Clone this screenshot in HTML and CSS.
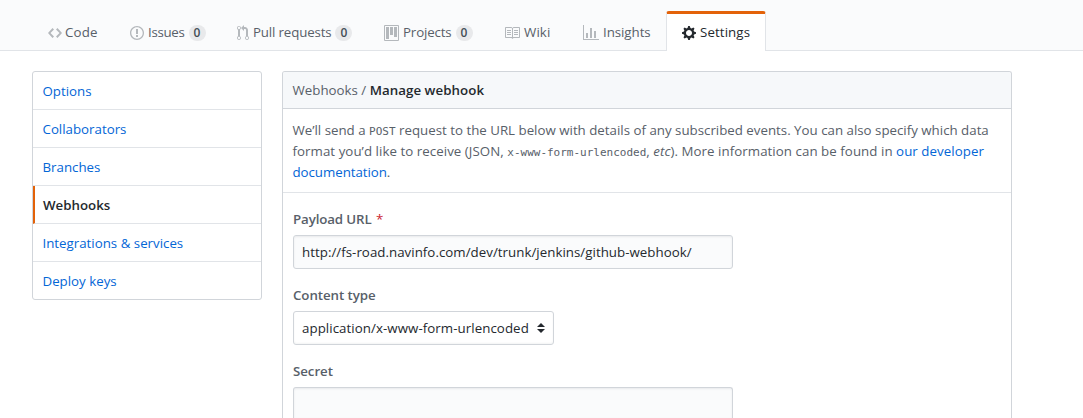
FILE: index.html
```html
<!DOCTYPE html>
<html lang="en">
<head>
<meta charset="utf-8">
<title>Manage webhook</title>
<link rel="stylesheet" href="styles.css">
</head>
<body>
<header class="repohead">
  <nav class="tabs">
    <a class="tab tab-code"><svg class="icon" width="14" height="16" viewBox="0 0 14 16"><path fill-rule="evenodd" d="M9.5 3L8 4.5 11.5 8 8 11.5 9.5 13 14 8 9.5 3zm-5 0L0 8l4.5 5L6 11.5 2.500 8 6 4.500 4.500 3z"/></svg><span>Code</span></a>
    <a class="tab tab-issues"><svg class="icon" width="14" height="16" viewBox="0 0 14 16"><path fill-rule="evenodd" d="M7 2.300c3.140 0 5.700 2.560 5.700 5.700s-2.560 5.700-5.700 5.700A5.710 5.710 0 0 1 1.300 8c0-3.140 2.560-5.700 5.700-5.700zM7 1C3.140 1 0 4.140 0 8s3.140 7 7 7 7-3.140 7-7-3.140-7-7-7zm1 3H6v5h2V4zm0 6H6v2h2v-2z"/></svg><span>Issues</span><span class="counter">0</span></a>
    <a class="tab tab-pulls"><svg class="icon" width="12" height="16" viewBox="0 0 12 16"><path fill-rule="evenodd" d="M11 11.280V5c-.03-.78-.34-1.470-.94-2.060C9.460 2.350 8.780 2.030 8 2H7V0L4 3l3 3V4h1c.27.02.48.11.69.31.21.2.3.42.31.69v6.280A1.993 1.993 0 0 0 10 15a1.993 1.993 0 0 0 1-3.720zm-1 2.920c-.66 0-1.200-.55-1.200-1.200 0-.65.55-1.200 1.200-1.200.65 0 1.200.55 1.200 1.200 0 .65-.55 1.200-1.200 1.200zM4 3c0-1.110-.89-2-2-2a1.993 1.993 0 0 0-1 3.720v6.560A1.993 1.993 0 0 0 2 15a1.993 1.993 0 0 0 1-3.720V4.720c.59-.34 1-.98 1-1.720zm-.8 10c0 .66-.55 1.200-1.200 1.200-.65 0-1.200-.55-1.200-1.200 0-.65.55-1.200 1.200-1.200.65 0 1.200.55 1.200 1.200zM2 4.200C1.340 4.200.8 3.650.8 3c0-.65.55-1.200 1.200-1.200.65 0 1.200.55 1.200 1.200 0 .65-.55 1.200-1.200 1.200z"/></svg><span>Pull requests</span><span class="counter">0</span></a>
    <a class="tab tab-projects"><svg class="icon" width="15" height="16" viewBox="0 0 15 16"><path fill-rule="evenodd" d="M10 12h3V2h-3v10zm-4-2h3V2H6v8zm-4 4h3V2H2v12zm-1 1h13V1H1v14zM14 0H1a1 1 0 0 0-1 1v14a1 1 0 0 0 1 1h13a1 1 0 0 0 1-1V1a1 1 0 0 0-1-1z"/></svg><span>Projects</span><span class="counter">0</span></a>
    <a class="tab tab-wiki"><svg class="icon" width="16" height="16" viewBox="0 0 16 16"><path fill-rule="evenodd" d="M3 5h4v1H3V5zm0 3h4V7H3v1zm0 2h4V9H3v1zm11-5h-4v1h4V5zm0 2h-4v1h4V7zm0 2h-4v1h4V9zm2-6v9c0 .55-.45 1-1 1H9.500l-1 1-1-1H2c-.55 0-1-.45-1-1V3c0-.55.45-1 1-1h5.500l1 1 1-1H15c.55 0 1 .45 1 1zm-8 .5L7.500 3H2v9h6V3.500zm7-.5H9.500l-.5.5V12h6V3z"/></svg><span>Wiki</span></a>
    <a class="tab tab-insights"><svg class="icon" width="16" height="16" viewBox="0 0 16 16"><path fill-rule="evenodd" d="M16 14v1H0V0h1v14h15zM5 13H3V8h2v5zm4 0H7V3h2v10zm4 0h-2V6h2v7z"/></svg><span>Insights</span></a>
    <a class="tab tab-settings selected"><svg class="icon" width="14" height="16" viewBox="0 0 14 16"><path fill-rule="evenodd" d="M14 8.770v-1.600l-1.940-.64-.45-1.090.88-1.840-1.130-1.130-1.810.91-1.090-.45-.69-1.920h-1.600l-.63 1.940-1.110.45-1.840-.88-1.130 1.130.91 1.810-.45 1.090L0 7.230v1.590l1.940.64.45 1.090-.88 1.840 1.130 1.130 1.810-.91 1.090.45.69 1.920h1.590l.63-1.940 1.110-.45 1.840.88 1.130-1.130-.92-1.810.47-1.090L14 8.750v.02zM7 11c-1.660 0-3-1.340-3-3s1.340-3 3-3 3 1.340 3 3-1.340 3-3 3z"/></svg><span>Settings</span></a>
  </nav>
</header>
<main class="layout">
  <nav class="menu">
    <a class="menu-item">Options</a>
    <a class="menu-item">Collaborators</a>
    <a class="menu-item">Branches</a>
    <a class="menu-item current">Webhooks</a>
    <a class="menu-item">Integrations &amp; services</a>
    <a class="menu-item">Deploy keys</a>
  </nav>
  <section class="panel">
    <h1 class="panel-head"><span class="crumb">Webhooks /</span> <strong>Manage webhook</strong></h1>
    <div class="intro">
      <div class="line line-1">We’ll send a <code>POST</code> request to the URL below with details of any subscribed events. You can also specify which data</div>
      <div class="line line-2">format you’d like to receive (JSON, <code>x-www-form-urlencoded</code>, <em>etc</em>). More information can be found in <a>our developer</a></div>
      <div class="line line-3"><a>documentation</a>.</div>
    </div>
    <form class="form">
      <div class="group">
        <label class="label l-url">Payload URL <span class="required">*</span></label>
        <div class="input">http://fs-road.navinfo.com/dev/trunk/jenkins/github-webhook/</div>
      </div>
      <div class="group">
        <label class="label">Content type</label>
        <div class="select"><span>application/x-www-form-urlencoded</span><svg width="8" height="10" viewBox="0 0 8 10"><path d="M4 0l4 4H0zM0 6h8l-4 4z"/></svg></div>
      </div>
      <div class="group">
        <label class="label">Secret</label>
        <div class="input input-cut"></div>
      </div>
    </form>
  </section>
</main>
</body>
</html>
```
FILE: styles.css
```css
* { box-sizing: border-box; }
body {
  margin: 0;
  background: #fff;
  color: #24292e;
  font: 13.3px/21px "Open Sans", "Noto Sans", sans-serif;
}
a { color: #0366d6; }

.repohead { height: 51px; padding: 11px 0 0 32px; background: #fafbfc; border-bottom: 1px solid #e1e4e8; }
.tabs { display: flex; height: 40px; }
.tab { display: flex; align-items: center; flex: none; height: 40px; padding: 3px 0 0 16px; color: #586069; white-space: nowrap; }
.icon { flex: none; margin-right: 4px; fill: #b4b8bc; }
.tab-code { width: 82px; letter-spacing: .15px; }
.tab-code .icon { margin-right: 3px; }
.tab-issues { width: 107px; letter-spacing: -.3px; }
.tab-pulls { width: 147px; letter-spacing: -.15px; }
.tab-projects { width: 120px; letter-spacing: -.15px; }
.tab-wiki { width: 79px; letter-spacing: .1px; }
.tab-wiki .icon { margin-right: 4px; }
.tab-insights { width: 99px; letter-spacing: -.05px; }
.tab-settings { width: 100px; letter-spacing: .1px; }
.counter { width: 17px; margin-left: 4px; border-radius: 20px; background: rgba(27,31,35,.08); color: #444d56; font-size: 12px; font-weight: 600; line-height: 16px; letter-spacing: 0; text-align: center; }
.selected { padding: 0 0 0 15px; background: #fff; border: 1px solid #e1e4e8; border-top: 3px solid #e36209; border-bottom: 0; border-radius: 3px 3px 0 0; color: #24292e; }
.selected .icon { fill: #24292e; }

.layout { display: grid; grid-template-columns: 230px 730px; gap: 20px; height: 367px; padding: 20px 0 0 32px; align-items: start; }
.menu { border: 1px solid #d1d5da; border-radius: 3px; }
.menu-item { display: block; height: 38px; padding: 9px 10px 7px 9.500px; border-bottom: 1px solid #e1e4e8; line-height: 21px; }
.menu-item:last-child { height: 37px; border-bottom: 0; }
.current { padding-left: 8px; border-left: 2px solid #e36209; color: #24292e; font-weight: 600; }

.panel { height: 347px; overflow: hidden; border: 1px solid #d1d5da; border-bottom: 0; border-radius: 3px 3px 0 0; }
.panel-head { height: 37px; margin: 0; padding: 8px 9.500px; background: #f6f8fa; border-bottom: 1px solid #d1d5da; font-size: inherit; font-weight: 400; line-height: 21px; color: #586069; }
.panel-head strong { color: #24292e; font-weight: 600; letter-spacing: .05px; }
.intro { height: 84px; padding: 11px 9.500px 0; border-bottom: 1px solid #e1e4e8; color: #586069; }
.line { height: 21px; white-space: nowrap; }
.line-2 { letter-spacing: .05px; }
.line-3 { letter-spacing: -.05px; }
code { font: 11px "DejaVu Sans Mono", "Liberation Mono", monospace; letter-spacing: 0; }
.form { padding: 15px 10px 0; }
.group { margin-bottom: 15px; }
.group:last-child { margin-bottom: 0; }
.label { display: block; height: 22px; padding-top: 1px; margin-bottom: 5px; color: #586069; font-weight: 600; line-height: 21px; letter-spacing: -.06px; }
.l-url { letter-spacing: -.12px; }
.required { color: #cb2431; font-weight: 400; margin-left: 1px; }
.input { width: 440px; height: 34px; padding: 6px 8px; border: 1px solid #d1d5da; border-radius: 3px; background: #fafbfc; box-shadow: inset 0 1px 2px rgba(27,31,35,.075); line-height: 20px; letter-spacing: .03px; white-space: nowrap; }
.input-cut { height: 31px; border-bottom: 0; border-radius: 3px 3px 0 0; }
.select { display: flex; align-items: center; justify-content: space-between; width: 261px; height: 34px; padding: 0 8px; border: 1px solid #d1d5da; border-radius: 3px; box-shadow: inset 0 -1px 2px rgba(27,31,35,.05); letter-spacing: .06px; white-space: nowrap; }
.select svg { fill: #24292e; }
```
